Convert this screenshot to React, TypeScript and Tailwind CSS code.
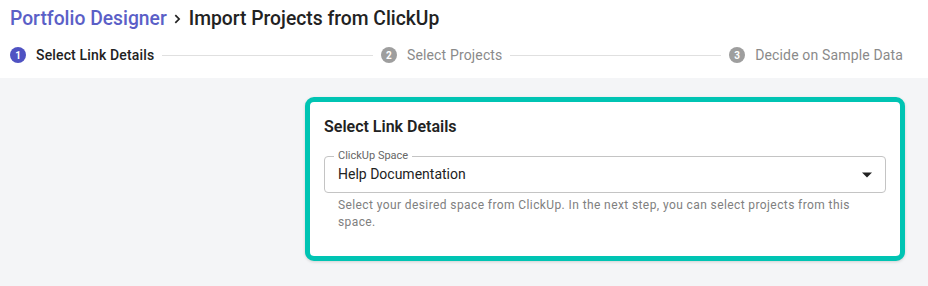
import React from "react";

const steps = [
    { n: 1, text: "Select Link Details", active: true },
    { n: 2, text: "Select Projects", active: false },
    { n: 3, text: "Decide on Sample Data", active: false },
];

const App = () => {
    return (
        <div className="w-[928px] h-[286px] bg-[#f4f5f7] font-['Roboto',sans-serif] overflow-hidden">
            {/* header */}
            <div className="bg-white h-[78px] pl-[10px] pr-[25px] pt-[6px]">
                <h1 className="text-[19.3px] leading-[26px] font-medium flex items-center">
                    <span className="text-[#5b5fc7]">Portfolio Designer</span>
                    <svg width="12" height="12" viewBox="0 0 24 24" className="ml-[4px] mr-[6px]">
                        <path d="M8.6 4.4 16.2 12l-7.6 7.6" stroke="#222" strokeWidth="3.4" fill="none" />
                    </svg>
                    <span className="text-[#222]">Import Projects from ClickUp</span>
                </h1>
                {/* stepper */}
                <div className="flex items-center mt-[11px] h-[24px]">
                    {steps.map((s, i) => (
                        <React.Fragment key={s.n}>
                            {i > 0 && <div className="flex-1 h-px bg-[#e0e0e0] mx-[8px]" />}
                            <div className="flex items-center gap-[10px]">
                                <div
                                    className={`w-[16px] h-[16px] rounded-full flex items-center justify-center text-white text-[10px] font-bold ${
                                        s.active ? "bg-[#4f52c2]" : "bg-[#9e9e9e]"
                                    }`}
                                >
                                    {s.n}
                                </div>
                                <span
                                    className={`text-[14px] tracking-[0.15px] ${
                                        s.active ? "text-[#222] font-medium" : "text-[#8a8a8a]"
                                    }`}
                                >
                                    {s.text}
                                </span>
                            </div>
                        </React.Fragment>
                    ))}
                </div>
            </div>
            {/* card */}
            <div className="flex justify-end pr-[23px] pt-[19px]">
                <div className="w-[600px] h-[164px] bg-white border-[5px] border-[#00c4b3] rounded-[9px] shadow-[0_1px_3px_rgba(0,0,0,0.15)] px-[14px] pt-[15px]">
                    <h2 className="text-[16px] leading-[20px] font-semibold text-[#222]">
                        Select Link Details
                    </h2>
                    <div className="relative mt-[19px] h-[37px] border border-[#c4c4c4] rounded-[4px] flex items-center justify-between pl-[13px] pr-[13px]">
                        <span className="absolute -top-[8px] left-[9px] bg-white px-[4px] text-[11px] leading-[14px] text-[#666]">
                            ClickUp Space
                        </span>
                        <span className="text-[14px] text-[#222]">Help Documentation</span>
                        <svg width="10" height="6" viewBox="0 0 10 5">
                            <path d="M0 0h10L5 5z" fill="#222" />
                        </svg>
                    </div>
                    <p className="mt-[4px] px-[14px] text-[12px] leading-[17px] text-[#808080] tracking-[0.4px]">
                        Select your desired space from ClickUp. In the next step, you can select projects from this
                        space.
                    </p>
                </div>
            </div>
        </div>
    );
};

export default App;
